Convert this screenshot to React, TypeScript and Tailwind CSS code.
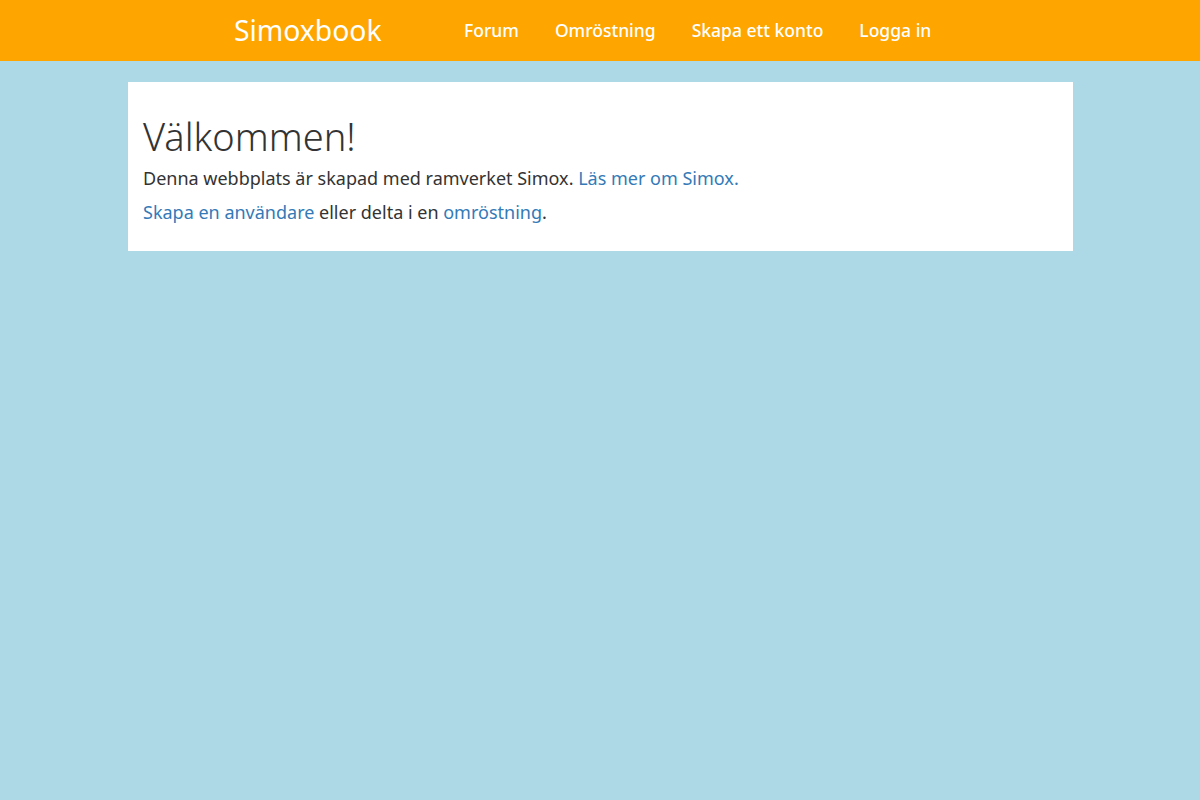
export default function App() {
  return (
    <div className="min-h-[800px] bg-[#add8e6]" style={{ fontFamily: '"Noto Sans", "Open Sans", sans-serif' }}>
      <header className="h-[61px] bg-[#ffa500] flex items-center">
        <div className="w-[732px] mx-auto flex items-center">
          <div className="text-[28.3px] text-white w-[230px] leading-none">Simoxbook</div>
          <nav className="flex gap-[36px] text-[17.5px] font-medium text-white leading-none">
            <a>Forum</a>
            <a>Omröstning</a>
            <a>Skapa ett konto</a>
            <a>Logga in</a>
          </nav>
        </div>
      </header>
      <main className="w-[945px] ml-[128px] mt-[21px] bg-white px-[15px] pt-[30px] pb-[27px] text-[#333]">
        <h1 className="text-[38px] font-light leading-[48px] mb-[6px]">Välkommen!</h1>
        <p className="text-[18px] leading-[24px] mb-[10px]">
          Denna webbplats är skapad med ramverket Simox. <a className="text-[#337ab7]">Läs mer om Simox.</a>
        </p>
        <p className="text-[18px] leading-[24px]">
          <a className="text-[#337ab7]">Skapa en användare</a> eller delta i en <a className="text-[#337ab7]">omröstning</a>.
        </p>
      </main>
    </div>
  );
}
